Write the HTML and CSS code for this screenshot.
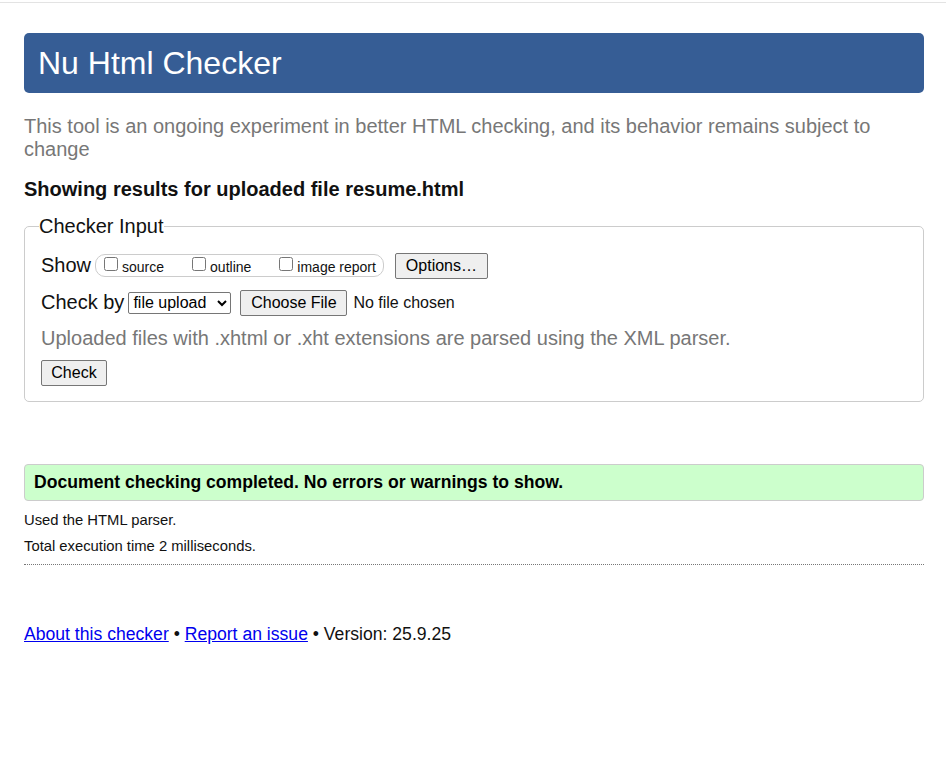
FILE: index.html
```html
<!DOCTYPE html>
<html>
<head>
<meta charset="utf-8">
<title>Nu Html Checker</title>
<link rel="stylesheet" href="styles.css">
</head>
<body>
<div class="topline"></div>
<div class="page">
  <h1 class="title">Nu Html Checker</h1>
  <p class="intro">This tool is an ongoing experiment in better HTML checking, and its behavior remains subject to change</p>
  <p class="showing">Showing results for uploaded file resume.html</p>
  <fieldset class="input">
    <legend class="legend">Checker Input</legend>
    <div class="row">
      <span class="label">Show</span>
      <span class="showbox">
        <label class="opt"><input type="checkbox" class="cb"> source</label>
        <label class="opt"><input type="checkbox" class="cb"> outline</label>
        <label class="opt"><input type="checkbox" class="cb"> image report</label>
      </span>
      <button class="btn options">Options…</button>
    </div>
    <div class="row">
      <span class="label">Check by</span>
      <select class="sel"><option>file upload</option></select>
      <button class="btn choose">Choose File</button>
      <span class="nofile">No file chosen</span>
    </div>
    <p class="note">Uploaded files with .xhtml or .xht extensions are parsed using the XML parser.</p>
    <button class="btn check">Check</button>
  </fieldset>
  <p class="success">Document checking completed. No errors or warnings to show.</p>
  <p class="small first">Used the HTML parser.</p>
  <p class="small">Total execution time 2 milliseconds.</p>
  <hr class="dots">
  <p class="footer"><a href="#">About this checker</a> • <a href="#">Report an issue</a> • Version: 25.9.25</p>
</div>
</body>
</html>
```
FILE: styles.css
```css
html, body { margin: 0; padding: 0; background: #fff; }
body { font-family: "Liberation Sans", Arial, sans-serif; color: #111; }
.topline { height: 2px; border-bottom: 1px solid #e3e3e3; }
.page { padding: 0 22px 0 24px; }
.title {
  margin: 30px 0 0;
  height: 60px;
  box-sizing: border-box;
  background: #365d95;
  color: #fff;
  font-weight: normal;
  font-size: 32px;
  line-height: 60px;
  padding: 0 14px;
  border-radius: 5px;
}
.intro { margin: 22px 0 0; font-size: 20px; line-height: 23px; color: #777; }
.showing { margin: 16px 0 0; font-size: 20px; font-weight: bold; line-height: 24px; color: #111; }
.input {
  margin: 14px 0 0;
  border: 1px solid #ccc;
  border-radius: 5px;
  padding: 10px 16px 15px 16px;
}
.legend { font-size: 20px; padding: 0; margin-left: -2px; line-height: 22px; }
.row { display: flex; align-items: center; height: 37px; }
.label { font-size: 20px; margin-right: 4px; }
.showbox {
  display: inline-flex;
  align-items: center;
  border: 1px solid #ccc;
  border-radius: 10px;
  height: 21px;
  padding: 0 7px 0 4px;
  font-size: 14px;
  margin-right: 11px;
}
.opt { display: inline-flex; align-items: center; margin-right: 24px; padding-top: 2px; }
.opt:last-child { margin-right: 0; }
.cb { margin: 0 4px 0 4px; width: 14px; height: 14px; position: relative; top: -3px; }
.btn {
  font-family: "Liberation Sans", Arial, sans-serif;
  font-size: 16px;
  background: #efefef;
  border: 1px solid #767676;
  border-radius: 2px;
  color: #000;
  padding: 1px 8px;
  height: 26px;
}
.options { width: 93px; }
.sel {
  font-family: "Liberation Sans", Arial, sans-serif;
  font-size: 16px;
  height: 22px;
  width: 103px;
  border: 1px solid #767676;
  border-radius: 2px;
  margin-right: 9px;
  background: #fff;
  color: #000;
}
.choose { width: 107px; margin-right: 6px; }
.nofile { font-size: 16px; }
.note { margin: 6px 0 10px; font-size: 20px; line-height: 23px; color: #777; }
.check { width: 66px; }
.success {
  margin: 62px 0 0;
  background: #ccffcc;
  border: 1px solid #ccc;
  border-radius: 4px;
  font-size: 17.6px;
  font-weight: bold;
  line-height: 35px;
  padding: 0 9px;
  color: #000;
}
.small { margin: 8px 0 0; font-size: 14.8px; line-height: 18px; color: #111; }
.small.first { margin-top: 10px; }
.dots { margin: 9px 0 0; border: 0; border-top: 1px dotted #777; height: 0; }
.footer { margin: 59px 0 0; font-size: 17.6px; color: #111; }
.footer a { color: #0000ee; }
```
